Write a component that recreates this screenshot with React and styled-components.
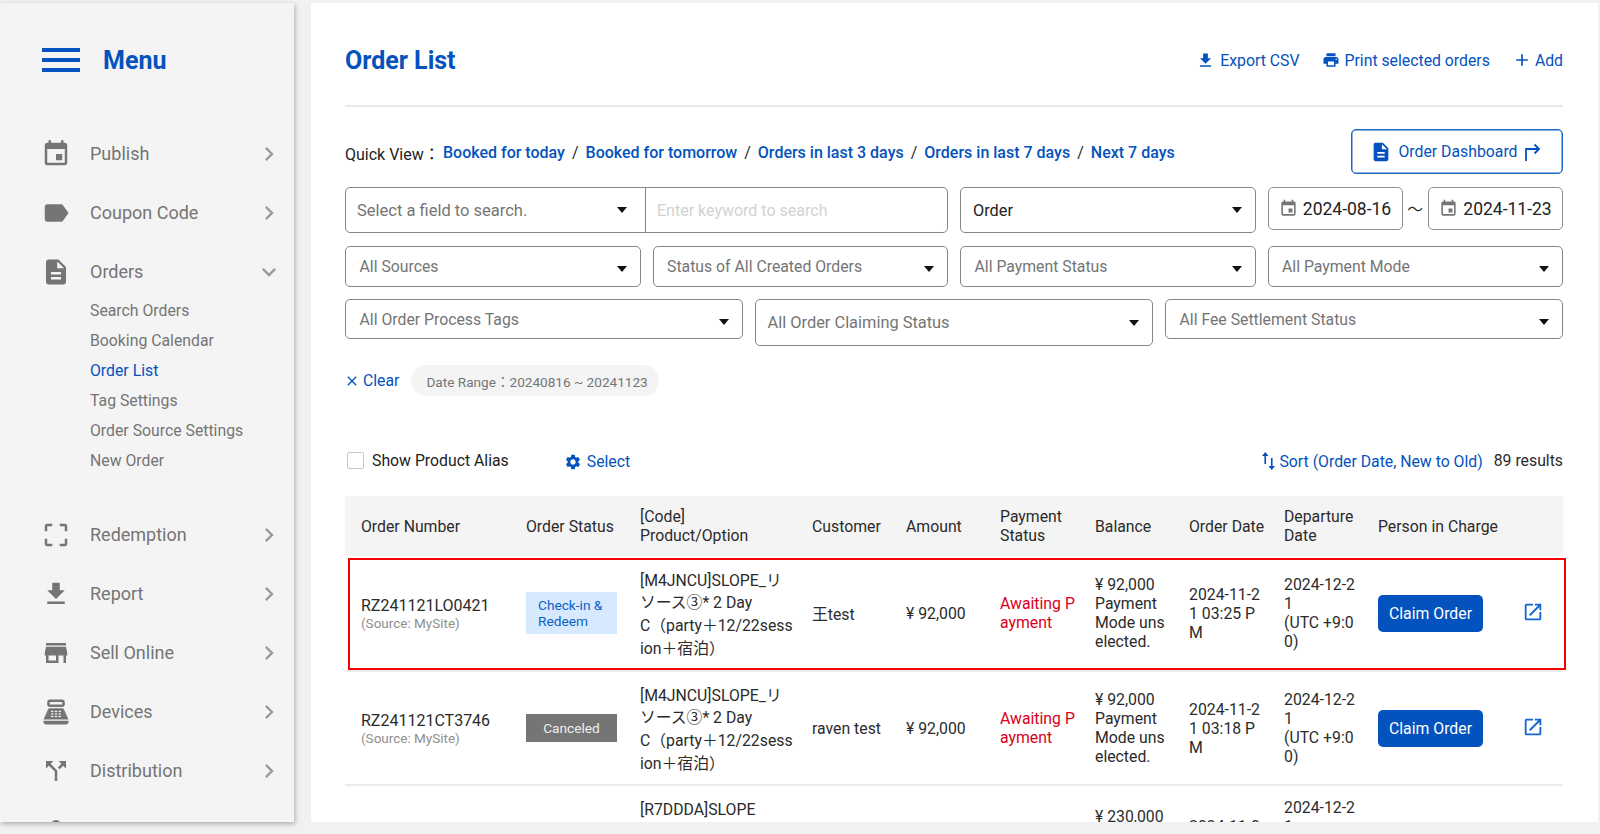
import React from 'react'
import styled, { createGlobalStyle } from 'styled-components'
import {
  MdEvent, MdLabel, MdDescription, MdCropFree, MdFileDownload, MdStore, MdPointOfSale,
  MdCallSplit, MdPerson, MdChevronRight, MdExpandMore, MdPrint, MdAdd, MdClose, MdSettings, MdOpenInNew,
} from 'react-icons/md'

const BLUE = '#0352bd'

const Global = createGlobalStyle`
  html, body { margin: 0; padding: 0; height: 100%; overflow: hidden; }
  body { font-family: Roboto, "Noto Sans CJK JP", sans-serif; font-size: 15.8px; color: #2b2b2b; background: #f0f1f3; }
  * { box-sizing: border-box; }
`

const Shell = styled.div`
  height: 834px;
  padding: 3px 2px 12px 0;
  display: flex;
  gap: 17px;
`
const Sidebar = styled.aside`
  width: 294px;
  flex: none;
  background: #f4f4f4;
  box-shadow: 1px 2px 5px rgba(0,0,0,.28);
  overflow: hidden;
`
const MenuHead = styled.div`
  height: 114px;
  padding: 0 0 0 42px;
  display: flex;
  align-items: center;
  gap: 23px;
  color: ${BLUE};
  font-size: 25px;
  font-weight: 700;
  margin-bottom: 7px;
`
const NavItem = styled.div`
  height: 59px;
  padding: 0 11px 0 41px;
  display: flex;
  align-items: center;
  font-size: 18px;
  color: #757575;
  > svg { flex: none; width: 30px; height: 30px; color: #757575; margin-right: 19px; }
  > span { flex: 1; }
`
const Chevron = styled.i`
  flex: none;
  display: flex;
  color: #9a9a9a;
  svg { width: 28px; height: 28px; }
`
const SubList = styled.div`
  margin-top: -6px;
  margin-bottom: 30px;
`
const SubItem = styled.div`
  height: 30px;
  padding-left: 90px;
  display: flex;
  align-items: center;
  font-size: 15.8px;
  color: ${p => (p.$active ? BLUE : '#757575')};
`

const Main = styled.main`
  flex: 1;
  min-width: 0;
  background: #fff;
  padding: 0 35px 0 34px;
  overflow: hidden;
`
const Header = styled.header`
  height: 104px;
  padding-top: 12px;
  border-bottom: 2px solid #e9e9e9;
  display: flex;
  align-items: center;
  justify-content: space-between;
`
const Title = styled.h1`
  margin: 0;
  font-size: 25px;
  font-weight: 700;
  color: ${BLUE};
`
const Actions = styled.div`
  display: flex;
  align-items: center;
  gap: 22px;
`
const TextLink = styled.a`
  display: inline-flex;
  align-items: center;
  gap: ${p => p.$gap || 5}px;
  color: ${BLUE};
`
const QuickRow = styled.div`
  margin-top: 22px;
  display: flex;
  align-items: center;
  justify-content: space-between;
`
const QuickLinks = styled.div`
  padding-top: 2px;
  display: flex;
  align-items: center;
  gap: 7px;
  font-size: 16px;
  b { font-weight: 500; color: ${BLUE}; }
`
const QuickLabel = styled.span`
  width: 91px;
  white-space: nowrap;
  color: #222;
`
const DashButton = styled.button`
  width: 212px;
  height: 45px;
  padding: 0 3px 0 0;
  background: #fff;
  border: 1px solid #1a68c8;
  border-radius: 5px;
  box-shadow: inset 0 0 0 .5px #1a68c8;
  color: ${BLUE};
  font: inherit;
  display: flex;
  align-items: center;
  justify-content: center;
  gap: 6px;
`
const FilterRow = styled.div`
  margin-top: ${p => p.$mt}px;
  display: grid;
  grid-template-columns: repeat(${p => p.$cols}, 1fr);
  gap: 12px;
  align-items: start;
`
const Select = styled.div`
  height: ${p => p.$h}px;
  padding: 0 13px 0 ${p => p.$pl || 13.5}px;
  border: 1px solid #858585;
  border-radius: 5px;
  display: flex;
  align-items: center;
  justify-content: space-between;
  font-size: ${p => p.$fs || 15.8}px;
  color: ${p => (p.$dark ? '#222' : '#757575')};
`
const Caret = styled.i`
  width: 0;
  height: 0;
  margin-top: ${p => p.$down || 0}px;
  border-left: 5.5px solid transparent;
  border-right: 5.5px solid transparent;
  border-top: 6px solid #111;
`
const SearchGroup = styled.div`
  grid-column: span 2;
  height: 46px;
  border: 1px solid #858585;
  border-radius: 5px;
  display: flex;
`
const SearchField = styled.div`
  width: 300px;
  padding: 0 18px 0 11px;
  border-right: 1px solid #858585;
  display: flex;
  align-items: center;
  justify-content: space-between;
  font-size: 16.5px;
  color: #757575;
`
const Keyword = styled.div`
  flex: 1;
  padding-left: 11px;
  display: flex;
  align-items: center;
  font-size: 16px;
  color: #d2d2d2;
`
const DateRange = styled.div`
  display: flex;
  align-items: center;
  justify-content: space-between;
`
const DateBox = styled.div`
  width: 135px;
  height: 43px;
  border: 1px solid #8f8f8f;
  border-radius: 5px;
  display: flex;
  align-items: center;
  justify-content: center;
  gap: 5px;
  font-size: 17.5px;
  color: #222;
  svg { color: #757575; }
`
const ClearRow = styled.div`
  margin: 19px 0 0 -1px;
  display: flex;
  align-items: center;
  gap: 12px;
`
const Chip = styled.span`
  height: 31px;
  padding: 0 11px 0 15px;
  border-radius: 16px;
  background: #f4f4f4;
  color: #757575;
  font-size: 13.6px;
  display: flex;
  align-items: center;
`
const Toolbar = styled.div`
  height: 28px;
  margin: 50px 0 22px;
  display: flex;
  align-items: center;
  justify-content: space-between;
`
const ToolGroup = styled.div`
  display: flex;
  align-items: center;
  gap: ${p => p.$gap}px;
`
const Alias = styled.label`
  padding-left: 2px;
  display: flex;
  align-items: center;
  gap: 8px;
  color: #222;
  i { width: 17px; height: 17px; border: 1px solid #c9c9c9; border-radius: 2px; }
`
const NudgedLink = styled(TextLink)`
  padding-top: ${p => p.$nudge}px;
`
const TableWrap = styled.div`
  position: relative;
`
const RedMark = styled.div`
  position: absolute;
  left: 3px;
  right: -3px;
  top: 62px;
  height: 112px;
  border: 2px solid #f60000;
  pointer-events: none;
`
const Table = styled.table`
  width: 100%;
  table-layout: fixed;
  border-collapse: collapse;
`
const HeadRow = styled.tr`
  height: 60px;
  background: #f4f4f4;
  th { padding: 0 8px; font-weight: 400; text-align: left; color: #2b2b2b; }
  th:first-child { padding-left: 16px; }
`
const Row = styled.tr`
  height: ${p => p.$h}px;
  border-bottom: 2px solid #ececec;
`
const Cell = styled.td`
  padding: ${p => (p.$top !== undefined ? `${p.$top}px 8px 0` : '0 8px')};
  vertical-align: ${p => (p.$top !== undefined ? 'top' : 'middle')};
  white-space: nowrap;
  color: ${p => p.$color || '#2b2b2b'};
  &:first-child { padding-left: 16px; }
`
const ProductCell = styled(Cell)`
  padding-top: 4px;
  line-height: 22.7px;
`
const OrderNo = styled.div`
  font-size: 16px;
`
const Source = styled.div`
  font-size: 13.5px;
  color: #8f8f8f;
`
const Badge = styled.div`
  width: 91px;
  font-size: 13.7px;
  line-height: 16.4px;
  padding: ${p => (p.$cancel ? '6px 0' : '5px 0 5px 12px')};
  text-align: ${p => (p.$cancel ? 'center' : 'left')};
  background: ${p => (p.$cancel ? '#757575' : '#d6e9ff')};
  color: ${p => (p.$cancel ? '#eee' : '#0b5fc6')};
`
const ChargeCell = styled.div`
  display: flex;
  align-items: center;
  gap: 39px;
  svg { color: #1565d0; margin-top: -3px; }
`
const ClaimButton = styled.button`
  width: 105px;
  height: 37px;
  padding: 0;
  border: 0;
  border-radius: 5px;
  background: ${BLUE};
  color: #fff;
  font: inherit;
`

const HamburgerIcon = () => (
  <svg width="38" height="24" viewBox="0 0 38 24"><path d="M0 2h38M0 12h38M0 22h38" stroke={BLUE} strokeWidth="4" /></svg>
)
const BendArrowIcon = () => (
  <svg width="17" height="18" viewBox="0 0 17 18" fill="none" stroke={BLUE} strokeWidth="1.8">
    <path d="M2 18V6h13M10.5 1.5 15 6l-4.5 4.5" />
  </svg>
)
const SortIcon = () => (
  <svg width="13" height="18" viewBox="0 0 14 18" fill={BLUE} preserveAspectRatio="none">
    <path d="M3.5 0 7 4H4.4v8H2.6V4H0zM10.5 18 7 14h2.6V6h1.8v8H14z" />
  </svg>
)

const navTop = [
  ['Publish', MdEvent],
  ['Coupon Code', MdLabel],
]
const subItems = ['Search Orders', 'Booking Calendar', 'Order List', 'Tag Settings', 'Order Source Settings', 'New Order']
const navBottom = [
  ['Redemption', MdCropFree],
  ['Report', MdFileDownload],
  ['Sell Online', MdStore],
  ['Devices', MdPointOfSale],
  ['Distribution', MdCallSplit],
  ['Account', MdPerson],
]
const columns = [
  [173, 'Order Number'], [114, 'Order Status'], [172, '[Code]|Product/Option'], [94, 'Customer'], [94, 'Amount'],
  [95, 'Payment|Status'], [94, 'Balance'], [95, 'Order Date'], [94, 'Departure|Date'], [193, 'Person in Charge'],
]
const product = ['[M4JNCU]SLOPE_リ', 'ソース③* 2 Day', 'C（party＋12/22sess', 'ion＋宿泊）']
const orders = [
  { no: 'RZ241121LO0421', customer: '王test', time: '1 03:25 P', cancel: false, h: 115 },
  { no: 'RZ241121CT3746', customer: 'raven test', time: '1 03:18 P', cancel: true, h: 114 },
]

const Lines = ({ items }) => items.map((t, i) => <div key={i}>{t}</div>)

const NavEntry = ({ label, icon: Icon, open }) => (
  <NavItem>
    <Icon />
    <span>{label}</span>
    <Chevron>{open ? <MdExpandMore /> : <MdChevronRight />}</Chevron>
  </NavItem>
)

export default function App() {
  return (
    <>
      <Global />
      <Shell>
        <Sidebar>
          <MenuHead><HamburgerIcon />Menu</MenuHead>
          {navTop.map(([l, I]) => <NavEntry key={l} label={l} icon={I} />)}
          <NavEntry label="Orders" icon={MdDescription} open />
          <SubList>
            {subItems.map(s => <SubItem key={s} $active={s === 'Order List'}>{s}</SubItem>)}
          </SubList>
          {navBottom.map(([l, I]) => <NavEntry key={l} label={l} icon={I} />)}
        </Sidebar>

        <Main>
          <Header>
            <Title>Order List</Title>
            <Actions>
              <TextLink><MdFileDownload size={19} />Export CSV</TextLink>
              <TextLink><MdPrint size={18} />Print selected orders</TextLink>
              <TextLink $gap={3}><MdAdd size={20} />Add</TextLink>
            </Actions>
          </Header>

          <QuickRow>
            <QuickLinks>
              <QuickLabel>Quick View：</QuickLabel>
              <b>Booked for today</b><span>/</span>
              <b>Booked for tomorrow</b><span>/</span>
              <b>Orders in last 3 days</b><span>/</span>
              <b>Orders in last 7 days</b><span>/</span>
              <b>Next 7 days</b>
            </QuickLinks>
            <DashButton><MdDescription size={22} />Order Dashboard<BendArrowIcon /></DashButton>
          </QuickRow>

          <FilterRow $cols={4} $mt={13}>
            <SearchGroup>
              <SearchField>Select a field to search.<Caret /></SearchField>
              <Keyword>Enter keyword to search</Keyword>
            </SearchGroup>
            <Select $h={46} $dark $pl={12} $fs={16.3}>Order<Caret /></Select>
            <DateRange>
              <DateBox><MdEvent size={19} />2024-08-16</DateBox>
              <span>～</span>
              <DateBox><MdEvent size={19} />2024-11-23</DateBox>
            </DateRange>
          </FilterRow>
          <FilterRow $cols={4} $mt={13}>
            {['All Sources', 'Status of All Created Orders', 'All Payment Status', 'All Payment Mode'].map(s => (
              <Select key={s} $h={41}>{s}<Caret $down={5} /></Select>
            ))}
          </FilterRow>
          <FilterRow $cols={3} $mt={12}>
            <Select $h={40}>All Order Process Tags<Caret $down={5} /></Select>
            <Select $h={47} $pl={11.5} $fs={16.4}>All Order Claiming Status<Caret /></Select>
            <Select $h={40}>All Fee Settlement Status<Caret $down={5} /></Select>
          </FilterRow>

          <ClearRow>
            <TextLink $gap={3}><MdClose size={16} />Clear</TextLink>
            <Chip>Date Range：20240816 ~ 20241123</Chip>
          </ClearRow>

          <Toolbar>
            <ToolGroup $gap={55}>
              <Alias><i />Show Product Alias</Alias>
              <NudgedLink $nudge={3}><MdSettings size={18} />Select</NudgedLink>
            </ToolGroup>
            <ToolGroup $gap={11}>
              <NudgedLink $nudge={2} $gap={4}><SortIcon />Sort (Order Date, New to Old)</NudgedLink>
              <span>89 results</span>
            </ToolGroup>
          </Toolbar>

          <TableWrap>
            <RedMark />
            <Table>
              <colgroup>
                {columns.map(([w], i) => <col key={i} width={w} />)}
              </colgroup>
              <thead>
                <HeadRow>
                  {columns.map(([, t]) => <th key={t}><Lines items={t.split('|')} /></th>)}
                </HeadRow>
              </thead>
              <tbody>
                {orders.map(o => (
                  <Row key={o.no} $h={o.h}>
                    <Cell><OrderNo>{o.no}</OrderNo><Source>(Source: MySite)</Source></Cell>
                    <Cell>
                      {o.cancel
                        ? <Badge $cancel>Canceled</Badge>
                        : <Badge>Check-in &amp;<br />Redeem</Badge>}
                    </Cell>
                    <ProductCell><Lines items={product} /></ProductCell>
                    <Cell>{o.customer}</Cell>
                    <Cell>¥ 92,000</Cell>
                    <Cell $color="#d9001b"><Lines items={['Awaiting P', 'ayment']} /></Cell>
                    <Cell><Lines items={['¥ 92,000', 'Payment', 'Mode uns', 'elected.']} /></Cell>
                    <Cell><Lines items={['2024-11-2', o.time, 'M']} /></Cell>
                    <Cell><Lines items={['2024-12-2', '1', '(UTC +9:0', '0)']} /></Cell>
                    <Cell>
                      <ChargeCell>
                        <ClaimButton>Claim Order</ClaimButton>
                        <MdOpenInNew size={22} />
                      </ChargeCell>
                    </Cell>
                  </Row>
                ))}
                <Row $h={115}>
                  <Cell />
                  <Cell />
                  <Cell $top={14}>[R7DDDA]SLOPE</Cell>
                  <Cell />
                  <Cell />
                  <Cell />
                  <Cell $top={21}>¥ 230,000</Cell>
                  <Cell $top={31}>2024-11-0</Cell>
                  <Cell $top={12}><Lines items={['2024-12-2', '1']} /></Cell>
                  <Cell />
                </Row>
              </tbody>
            </Table>
          </TableWrap>
        </Main>
      </Shell>
    </>
  )
}
